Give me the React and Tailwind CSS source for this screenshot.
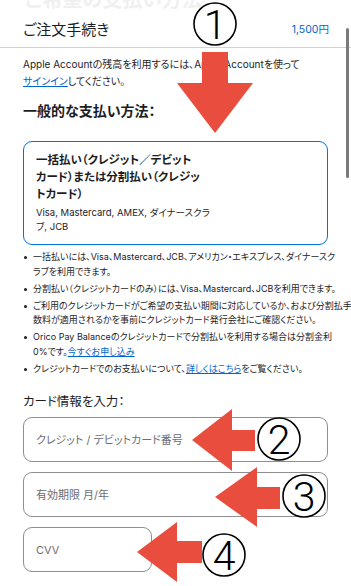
const bullets = [
  [<>一括払いには、Visa、Mastercard、JCB、アメリカン・エキスプレス、ダイナースク<br />ラブを利用できます。</>],
  [<>分割払い（クレジットカードのみ）には、Visa、Mastercard、JCBを利用できます。</>],
  [<>ご利用のクレジットカードがご希望の支払い期間に対応しているか、および分割払手<br />数料が適用されるかを事前にクレジットカード発行会社にご確認ください。</>],
  [<>Orico Pay Balanceのクレジットカードで分割払いを利用する場合は分割金利<br />0%です。<a className="text-[#0066cc] underline">今すぐお申し込み</a></>],
  [<>クレジットカードでのお支払いについて、<a className="text-[#0066cc] underline">詳しくはこちら</a>をご覧ください。</>],
]

function Annotations() {
  const red = '#e94d3d'
  const marks = [
    { n: '1', cx: 215, cy: 24 },
    { n: '2', cx: 279, cy: 439 },
    { n: '3', cx: 304, cy: 496 },
    { n: '4', cx: 224, cy: 555 },
  ]
  return (
    <svg className="absolute inset-0 pointer-events-none" width="351" height="586" viewBox="0 0 351 586">
      {/* arrows */}
      <polygon fill={red} points="202,52 228,52 228,83 253,83 215,133 177,83 202,83" />
      <polygon fill={red} points="192,440 232,409 232,430 255,430 255,451 232,451 232,471" />
      <polygon fill={red} points="215,497 257,467 257,487 280,487 280,509 257,509 257,527" />
      <polygon fill={red} points="137,552 177,522 177,541 202,541 202,563 177,563 177,582" />
      {marks.map(m => (
        <g key={m.n}>
          <circle cx={m.cx} cy={m.cy} r="21" fill="white" stroke="black" strokeWidth="1.6" />
          <text x={m.cx} y={m.cy + 14.5} textAnchor="middle" fontSize="41" fontWeight="300" fontFamily="Roboto, 'Liberation Sans', sans-serif" fill="black">{m.n}</text>
        </g>
      ))}
    </svg>
  )
}

export default function App() {
  return (
    <div className="relative w-[351px] h-[586px] overflow-hidden bg-white text-[#1d1d1f] font-[Inter,'Noto_Sans_CJK_JP',sans-serif] [font-feature-settings:'palt']">
      {/* faded page title behind sticky header */}
      <div className="h-[12px] overflow-hidden px-[25px]">
        <p className="-mt-[11px] text-[20px] leading-[22px] font-bold text-[#f0f0f0]">ご希望の支払い方法</p>
      </div>

      <header className="flex items-center justify-between h-[36px] border-b border-[#d2d2d7] pl-[23px] pr-[22px]">
        <h1 className="text-[15px] leading-[20px]">ご注文手続き</h1>
        <span className="text-[10.5px] text-[#0066cc]">1,500円</span>
      </header>

      <main className="px-[23px] pt-[8px]">
        <p className="text-[10px] leading-[17px]">
          Apple Accountの残高を利用するには、Apple Accountを使って<br />
          <a className="text-[#0066cc] underline">サインイン</a>してください。
        </p>

        <h2 className="mt-[11px] text-[14px] leading-[20px] font-bold">一般的な支払い方法：</h2>

        <div className="mt-[20px] border-[1.5px] border-[#0071e3] rounded-[9px] px-[12px] pt-[10px] pb-[10px]">
          <p className="text-[11.5px] leading-[17px] font-bold">
            一括払い（クレジット／デビット<br />
            カード）または分割払い（クレジッ<br />
            トカード）
          </p>
          <p className="mt-[3px] text-[9.5px] leading-[14px]">
            Visa, Mastercard, AMEX, ダイナースクラ<br />
            ブ, JCB
          </p>
        </div>

        <ul className="mt-[5px] flex flex-col gap-[2.5px] text-[9px] leading-[14.5px]">
          {bullets.map((b, i) => (
            <li key={i} className="flex gap-[6px]">
              <span className="mt-[6px] ml-[1px] w-[3px] h-[3px] rounded-full bg-[#1d1d1f] shrink-0" />
              <span className="whitespace-nowrap">{b}</span>
            </li>
          ))}
        </ul>

        <h3 className="mt-[17px] text-[12.5px] leading-[18px]">カード情報を入力：</h3>

        <div className="mt-[6px] flex flex-col gap-[10px]">
          <input readOnly placeholder="クレジット / デビットカード番号" className="h-[45px] w-full rounded-[9px] border border-[#8e8e93] px-[12px] text-[11px] placeholder:text-[#6e6e73] outline-none" />
          <input readOnly placeholder="有効期限 月/年" className="h-[45px] w-full rounded-[9px] border border-[#8e8e93] px-[12px] text-[11px] placeholder:text-[#6e6e73] outline-none" />
          <input readOnly placeholder="CVV" className="h-[45px] w-[129px] rounded-[9px] border border-[#8e8e93] px-[12px] text-[11px] placeholder:text-[#6e6e73] outline-none" />
        </div>
      </main>

      {/* scrollbar */}
      <div className="absolute left-[346px] top-[28px] w-[3px] h-[150px] rounded-full bg-[#7a7a7a]" />

      <Annotations />
    </div>
  )
}
